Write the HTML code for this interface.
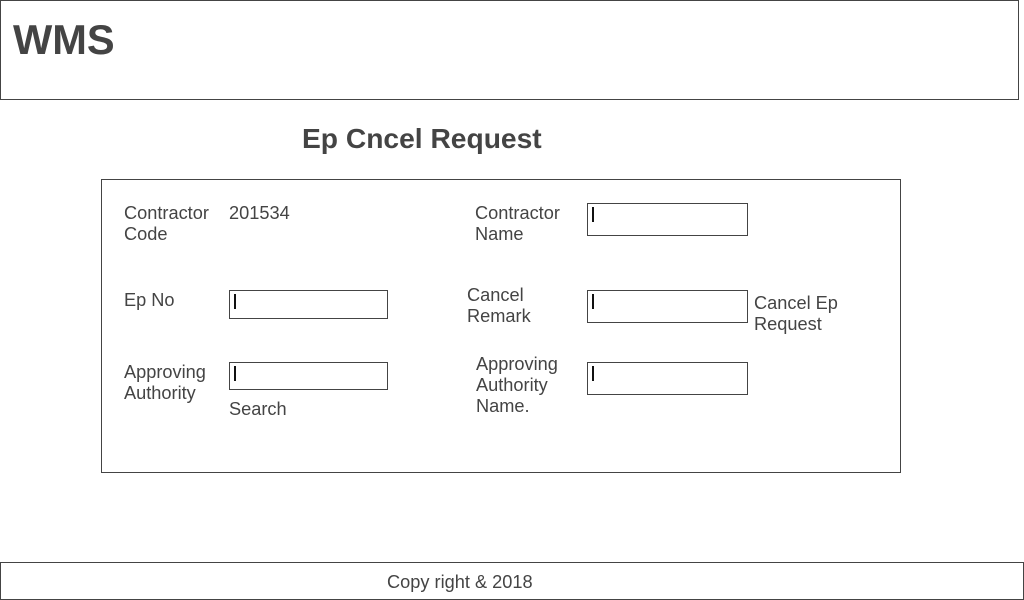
<!DOCTYPE html>
<html><head><meta charset="utf-8"><style>
*{margin:0;padding:0;box-sizing:border-box}
body{width:1024px;height:600px;background:#fff;position:relative;overflow:hidden;font-family:"Liberation Sans",sans-serif;color:#444}
.b{position:absolute;border:1px solid #444}
.t{position:absolute;font-size:18.2px;line-height:21px;white-space:nowrap;margin-top:1px}
.in{position:absolute;border:1px solid #444;background:#fff}
.in::after{content:"";position:absolute;left:4px;top:3px;width:1.5px;height:15px;background:#111}
</style></head><body>
<div class="b" style="left:0;top:0;width:1019px;height:100px"></div>
<div style="position:absolute;left:13px;top:20px;font-size:41.6px;line-height:40px;font-weight:bold">WMS</div>
<div style="position:absolute;left:302px;top:123px;font-size:28.2px;line-height:30px;font-weight:bold">Ep Cncel Request</div>
<div class="b" style="left:101px;top:179px;width:800px;height:294px"></div>

<div class="t" style="left:124px;top:202px">Contractor<br>Code</div>
<div class="t" style="left:229px;top:202px">201534</div>
<div class="t" style="left:475px;top:202px">Contractor<br>Name</div>
<div class="in" style="left:587px;top:203px;width:161px;height:33px"></div>

<div class="t" style="left:124px;top:289px">Ep No</div>
<div class="in" style="left:229px;top:290px;width:159px;height:29px"></div>
<div class="t" style="left:467px;top:284px">Cancel<br>Remark</div>
<div class="in" style="left:587px;top:290px;width:161px;height:33px"></div>
<div class="t" style="left:754px;top:292px">Cancel Ep<br>Request</div>

<div class="t" style="left:124px;top:361px">Approving<br>Authority</div>
<div class="in" style="left:229px;top:362px;width:159px;height:28px"></div>
<div class="t" style="left:229px;top:398px">Search</div>
<div class="t" style="left:476px;top:353px">Approving<br>Authority<br>Name.</div>
<div class="in" style="left:587px;top:362px;width:161px;height:33px"></div>

<div class="b" style="left:0;top:562px;width:1024px;height:38px"></div>
<div class="t" style="left:387px;top:571px">Copy right &amp; 2018</div>
</body></html>
